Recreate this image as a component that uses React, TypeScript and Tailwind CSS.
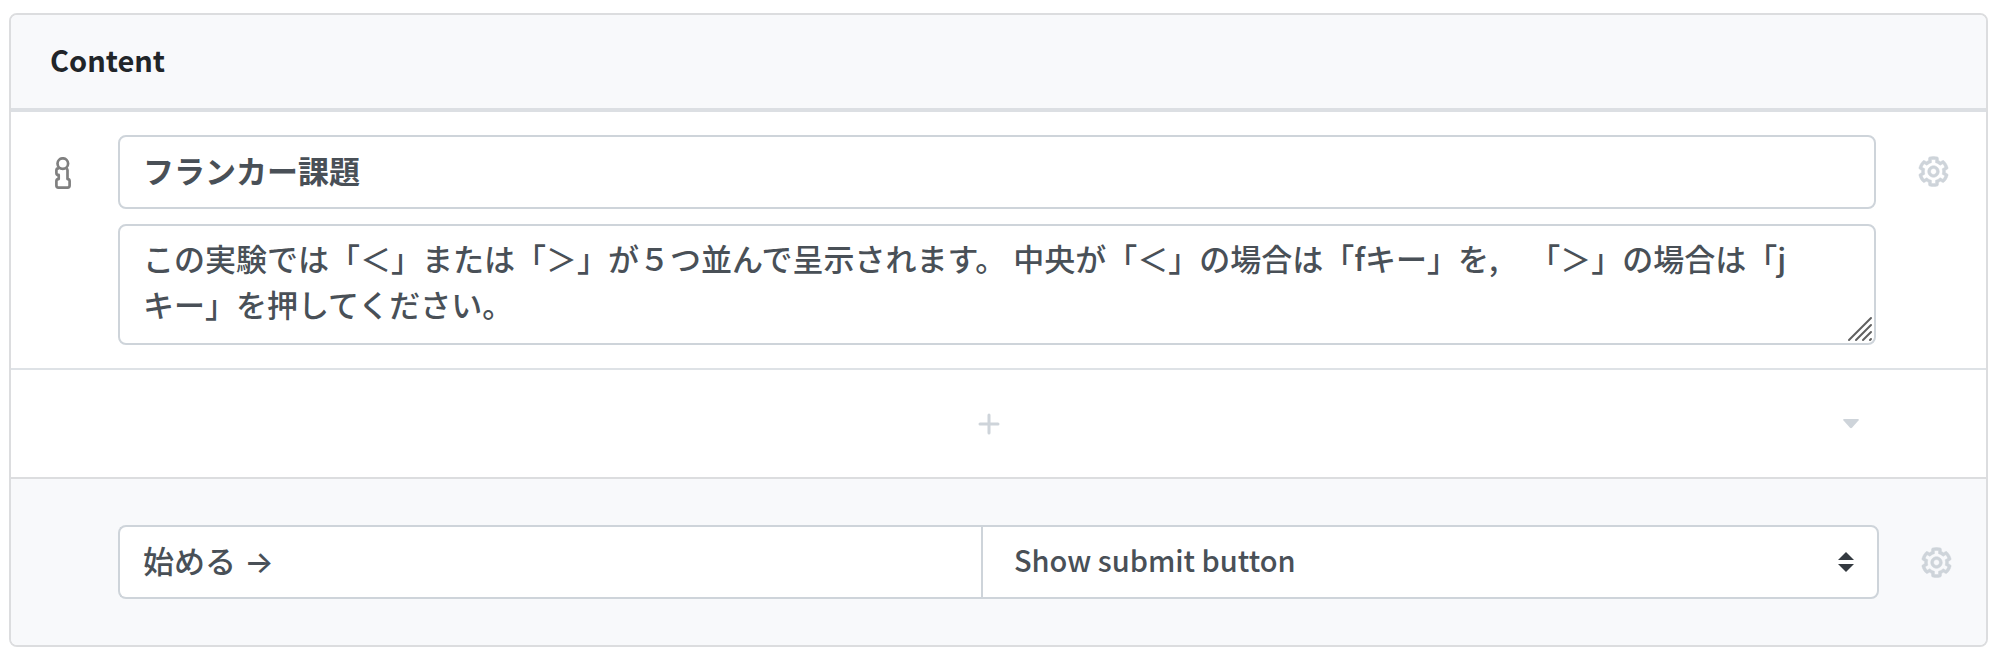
import React from "react";

const GEAR =
  "M452.515 237l31.843-18.382c9.426-5.441 13.996-16.542 11.177-27.054-11.404-42.531-33.842-80.547-64.058-110.797-7.68-7.688-19.575-9.246-28.985-3.811l-31.785 18.358a196.276 196.276 0 0 0-32.899-19.02V39.541a24.016 24.016 0 0 0-17.842-23.206c-41.761-11.107-86.117-11.121-127.93-.001-10.519 2.798-17.844 12.321-17.844 23.206v36.753a196.276 196.276 0 0 0-32.899 19.02l-31.785-18.358c-9.41-5.435-21.305-3.877-28.985 3.811-30.216 30.25-52.654 68.265-64.058 110.797-2.819 10.512 1.751 21.613 11.177 27.054L59.485 237a197.715 197.715 0 0 0 0 37.999l-31.843 18.382c-9.426 5.441-13.996 16.542-11.177 27.054 11.404 42.531 33.842 80.547 64.058 110.797 7.68 7.688 19.575 9.246 28.985 3.811l31.785-18.358a196.202 196.202 0 0 0 32.899 19.019v36.753a24.016 24.016 0 0 0 17.842 23.206c41.761 11.107 86.117 11.122 127.93.001 10.519-2.798 17.844-12.321 17.844-23.206v-36.753a196.34 196.34 0 0 0 32.899-19.019l31.785 18.358c9.41 5.435 21.305 3.877 28.985-3.811 30.216-30.25 52.654-68.266 64.058-110.797 2.819-10.512-1.751-21.613-11.177-27.054L452.515 275c1.22-12.65 1.22-25.35 0-38zm-52.679 63.019l43.819 25.289a200.138 200.138 0 0 1-33.849 58.528l-43.829-25.309c-31.984 27.397-36.659 30.077-76.168 44.029v50.599a200.917 200.917 0 0 1-67.618 0v-50.599c-39.504-13.95-44.196-16.642-76.168-44.029l-43.829 25.309a200.15 200.15 0 0 1-33.849-58.528l43.819-25.289c-7.63-41.299-7.634-46.719 0-88.038l-43.819-25.289c7.85-21.229 19.31-41.049 33.849-58.529l43.829 25.309c31.984-27.397 36.66-30.078 76.168-44.029V58.845a200.917 200.917 0 0 1 67.618 0v50.599c39.504 13.95 44.196 16.642 76.168 44.029l43.829-25.309a200.143 200.143 0 0 1 33.849 58.529l-43.819 25.289c7.631 41.3 7.634 46.718 0 88.037zM256 160c-52.935 0-96 43.065-96 96s43.065 96 96 96 96-43.065 96-96-43.065-96-96-96zm0 144c-26.468 0-48-21.532-48-48 0-26.467 21.532-48 48-48s48 21.533 48 48c0 26.468-21.532 48-48 48z";

function GearButton({ label }: { label: string }) {
  return (
    <button type="button" aria-label={label} className="text-[#ced4da]">
      <svg viewBox="0 0 512 512" className="size-[31px]" fill="currentColor" stroke="currentColor" strokeWidth="8" aria-hidden="true">
        <path d={GEAR} />
      </svg>
    </button>
  );
}

function InfoIcon() {
  return (
    <svg viewBox="0 0 16 32" className="h-8 w-4" fill="none" stroke="#808080" strokeWidth="2.7" strokeLinejoin="round" aria-hidden="true">
      <circle cx="7.8" cy="6.6" r="5.3" />
      <path d="M4.200 11.300H3.400a2 2 0 0 0-2 2v2.600a2 2 0 0 0 2 2h.3v4.200h-.3a2 2 0 0 0-2 2v4.500a2 2 0 0 0 2 2h9.200a2 2 0 0 0 2-2v-4.500a2 2 0 0 0-2-2h-.1v-8.800a2 2 0 0 0-1.100-1.800" />
    </svg>
  );
}

const field = "border-2 border-[#ced4da] bg-white text-[#495057] outline-none";

export default function App() {
  return (
    <main className="pt-[13px] pr-3 pl-[9px] font-['Noto_Sans_CJK_JP',sans-serif]">
      <section className="overflow-hidden rounded-lg border-2 border-[#dcdddf] bg-white">
        <header className="border-b-4 border-[#dcdfe3] bg-[#f8f9fb] px-[39px] pt-[22px] pb-[26px]">
          <h2 className="text-[29px] leading-[45px] font-bold text-[#212529]">Content</h2>
        </header>

        <div className="flex border-b-2 border-[#dee2e6] py-[23px]">
          <div className="flex w-[107px] shrink-0 justify-center pt-[22px] pr-1">
            <InfoIcon />
          </div>
          <div className="flex min-w-0 grow flex-col gap-[15px]">
            <input
              aria-label="Title"
              defaultValue="フランカー課題"
              className={`${field} h-[74px] w-full rounded-lg px-[23px] pb-1.5 text-[31px] font-bold`}
            />
            <div className="relative flex">
              <textarea
                aria-label="Text"
                defaultValue="この実験では「＜」または「＞」が５つ並んで呈示されます。 中央が「＜」の場合は「fキー」を,　「＞」の場合は「jキー」を押してください。"
                className={`${field} h-[121px] w-full resize-none rounded-lg py-[9px] pr-[76px] pl-[23px] text-[31px] leading-[46px] font-medium [text-spacing-trim:space-all]`}
              />
              <svg viewBox="0 0 26 26" className="pointer-events-none absolute right-[3px] bottom-[3px] size-[26px]" stroke="#606060" strokeWidth="2" strokeLinecap="round" aria-hidden="true">
                <path d="M2 24L24 2M9 24L24 9M16 24L24 16M23 24L24 23" />
              </svg>
            </div>
          </div>
          <div className="flex w-[110px] shrink-0 justify-center pt-[21px] pl-1">
            <div>
              <GearButton label="Text settings" />
            </div>
          </div>
        </div>

        <div className="flex h-[109px] items-center border-b-2 border-[#dcdddf] text-[#ced4da]">
          <button type="button" aria-label="Add item" className="flex grow justify-center pl-[123px]">
            <svg viewBox="0 0 22 22" className="size-[22px]" stroke="currentColor" strokeWidth="3" strokeLinecap="round" aria-hidden="true">
              <path d="M2 11H20M11 2V20" />
            </svg>
          </button>
          <button type="button" aria-label="Choose item type" className="flex w-[143px] justify-start">
            <svg viewBox="0 0 16 10" className="h-[10px] w-4" fill="currentColor" aria-hidden="true">
              <path d="M1 0H15Q16.400 .4 15.500 1.500L9 8.700Q8 9.600 7 8.700L.5 1.500Q-.4 .4 1 0Z" />
            </svg>
          </button>
        </div>

        <footer className="flex items-center bg-[#f8f9fb] py-[46px] pl-[107px]">
          <div className="flex min-w-0 grow">
            <input
              aria-label="Button label"
              defaultValue="始める →"
              className={`${field} h-[74px] w-[49%] rounded-l-lg border-r-0 px-[23px] pb-1.5 font-[Inter,'Noto_Sans_CJK_JP',sans-serif] text-[31px] font-medium`}
            />
            <div className="relative min-w-0 grow">
              <select
                aria-label="Submit button"
                className={`${field} block h-[74px] w-full appearance-none rounded-r-lg px-[31px] pb-1 text-[29px] font-medium`}
              >
                <option>Show submit button</option>
              </select>
              <svg viewBox="0 0 16 20" className="pointer-events-none absolute top-[27px] right-[25px] h-5 w-4" fill="#343a40" aria-hidden="true">
                <path d="M8 0L16 8H0ZM0 12H16L8 20Z" />
              </svg>
            </div>
          </div>
          <div className="flex w-[107px] shrink-0 justify-center pl-2">
            <GearButton label="Button settings" />
          </div>
        </footer>
      </section>
    </main>
  );
}
